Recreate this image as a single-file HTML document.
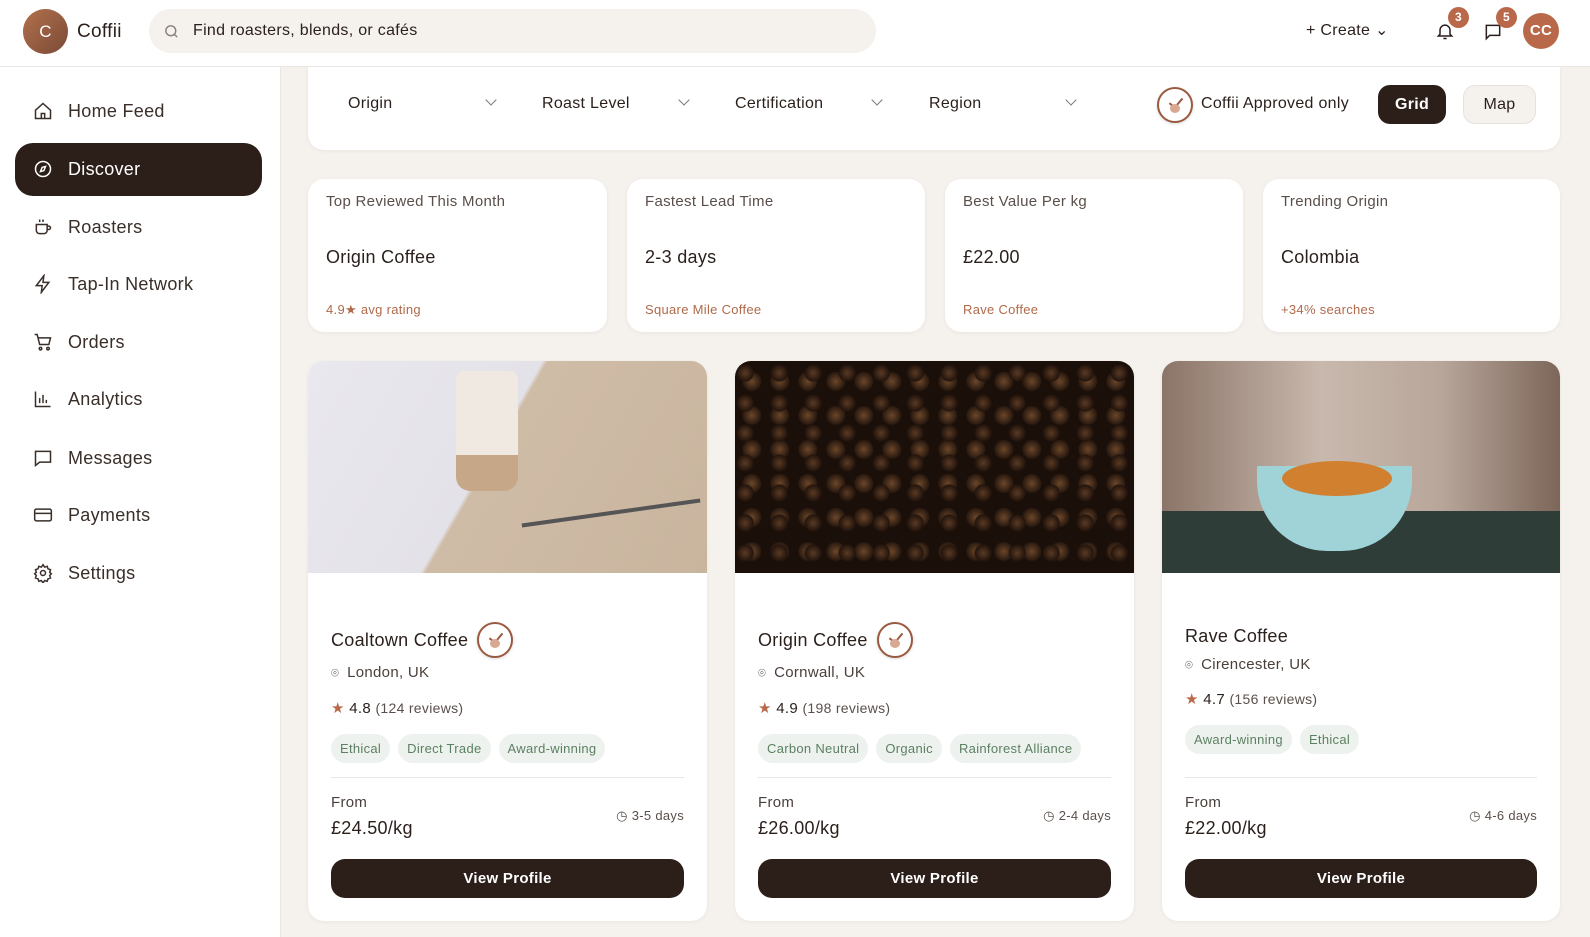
<!DOCTYPE html><html><head><meta charset="utf-8"><style>
*{box-sizing:border-box;margin:0;padding:0}
body{width:1590px;height:937px;overflow:hidden;font-family:"Liberation Sans",sans-serif;background:#f5f1ec;color:#2a1f1b;position:relative;letter-spacing:.3px}
.hdr{position:absolute;z-index:5;left:0;top:0;width:1590px;height:67px;background:#fff;border-bottom:1px solid #ebe6e1}
.logo{position:absolute;left:23px;top:9px;width:45px;height:45px;border-radius:50%;background:linear-gradient(135deg,#b2714d,#7a4a36);color:#fff;font-size:17px;text-align:center;line-height:45px}
.brand{position:absolute;left:77px;top:21px;font-size:19px}
.search{position:absolute;left:149px;top:9px;width:727px;height:44px;border-radius:22px;background:#f5f1ec}
.search span{position:absolute;left:44px;top:13px;font-size:16px}
.side{position:absolute;left:0;top:67px;width:281px;height:870px;background:#fff;border-right:1px solid #ebe6e1}
.nav{position:absolute;left:15px;width:247px;height:53px;border-radius:18px;font-size:18px;color:#3a2e29}
.nav svg{position:absolute;left:18px;top:16px}
.nav span{position:absolute;left:53px;top:16px}
.nav.on{background:#2c1f1a;color:#fff}
.card{position:absolute;background:#fff;border-radius:16px;box-shadow:0 1px 4px rgba(0,0,0,.05)}
.flt{font-size:16px;position:absolute;top:95px}
.chev{position:absolute;top:96px;width:8px;height:8px;border-right:1.5px solid #777;border-bottom:1.5px solid #777;transform:rotate(45deg)}
.st .a{position:absolute;left:18px;top:14px;font-size:15px;color:#5a4f4a}
.st .b{position:absolute;left:18px;top:68px;font-size:18px}
.st .c{position:absolute;left:18px;top:123px;font-size:13px;color:#b06a4a}
.pc .img{position:absolute;left:0;top:0;width:100%;height:212px;border-radius:16px 16px 0 0;overflow:hidden}
.pc .nm{position:absolute;left:23px;font-size:18px;display:flex;align-items:center;gap:9px}
.pc .loc{position:absolute;left:23px;font-size:15px;color:#4a3f3a;display:flex;align-items:center;gap:8px}
.pc .rt{position:absolute;left:23px;font-size:15px}
.tags{position:absolute;left:23px;display:flex;gap:8px}
.tag{background:#eef2ee;color:#5b8062;font-size:13px;padding:7px 9px;border-radius:15px}
.pc hr{position:absolute;left:23px;right:23px;border:0;border-top:1px solid #ebe6e1}
.pc .fr{position:absolute;left:23px;top:433px;font-size:15px;color:#4a3f3a}
.pc .pr{position:absolute;left:23px;top:457px;font-size:18px}
.pc .dy{position:absolute;right:23px;top:447px;font-size:13px;color:#5a4f4a}
.pc .btn{position:absolute;left:23px;right:23px;top:498px;height:39px;border-radius:14px;background:#2c1f1a;color:#fff;font-weight:bold;font-size:15px;text-align:center;line-height:39px}
.badge{position:relative;display:inline-block;width:36px;height:36px;border-radius:50%;border:2px solid #9a5a40;background:#fff;box-shadow:0 1px 3px rgba(0,0,0,.15)}
.badge:after{content:"";position:absolute;left:11px;top:15px;width:10px;height:9px;border-radius:50%;background:#d8a891}
.badge:before{content:"";position:absolute;left:13px;top:6px;width:6px;height:11px;border-right:2px solid #9a5a40;border-bottom:2px solid #9a5a40;transform:rotate(40deg)}
.bdg{position:absolute;width:21px;height:21px;border-radius:50%;background:#b9694a;color:#fff;font-size:12px;font-weight:bold;text-align:center;line-height:21px}
</style></head><body>
<div class="hdr">
<div class="logo">C</div><div class="brand">Coffii</div>
<div class="search"><svg style="position:absolute;left:14px;top:14px" width="17" height="17" viewBox="0 0 24 24" fill="none" stroke="#8a7f7a" stroke-width="2"><circle cx="11" cy="11" r="7"/><path d="M20 20l-4-4"/></svg><span>Find roasters, blends, or cafés</span></div>
<div style="position:absolute;left:1306px;top:20px;font-size:16px">+ Create ⌄</div>
<svg style="position:absolute;left:1435px;top:21px" width="20" height="20" viewBox="0 0 24 24" fill="none" stroke="#2a1f1b" stroke-width="1.8"><path d="M6 16V11a6 6 0 0112 0v5l2 2H4z M10 21h4"/></svg>
<div class="bdg" style="left:1448px;top:7px">3</div>
<svg style="position:absolute;left:1483px;top:22px" width="20" height="20" viewBox="0 0 24 24" fill="none" stroke="#2a1f1b" stroke-width="1.8"><path d="M4 4h16v12H8l-4 4z"/></svg>
<div class="bdg" style="left:1496px;top:7px">5</div>
<div style="position:absolute;left:1523px;top:13px;width:36px;height:36px;border-radius:50%;background:#b9694a;color:#fff;font-weight:bold;font-size:15px;text-align:center;line-height:36px">CC</div>
</div>
<div class="side">
<div class="nav" style="top:18px"><svg width="20" height="20" viewBox="0 0 24 24" fill="none" stroke="currentColor" stroke-width="1.8"><path d="M3 11l9-8 9 8v10H3z M10 21v-6h4v6"/></svg><span>Home Feed</span></div>
<div class="nav on" style="top:76px"><svg width="20" height="20" viewBox="0 0 24 24" fill="none" stroke="#fff" stroke-width="1.8"><circle cx="12" cy="12" r="9"/><path d="M15 9l-2 5-4 1 2-5z"/></svg><span>Discover</span></div>
<div class="nav" style="top:134px"><svg width="20" height="20" viewBox="0 0 24 24" fill="none" stroke="currentColor" stroke-width="1.8"><path d="M4 9h13v7a4 4 0 01-4 4H8a4 4 0 01-4-4z M17 11h2a2 2 0 010 4h-2 M8 3v3 M12 3v3"/></svg><span>Roasters</span></div>
<div class="nav" style="top:191px"><svg width="20" height="20" viewBox="0 0 24 24" fill="none" stroke="currentColor" stroke-width="1.8"><path d="M13 2L4 14h7l-1 8 9-12h-7z"/></svg><span>Tap-In Network</span></div>
<div class="nav" style="top:249px"><svg width="20" height="20" viewBox="0 0 24 24" fill="none" stroke="currentColor" stroke-width="1.8"><path d="M2 3h3l3 12h11l2-8H6"/><circle cx="9" cy="20" r="1.5"/><circle cx="18" cy="20" r="1.5"/></svg><span>Orders</span></div>
<div class="nav" style="top:306px"><svg width="20" height="20" viewBox="0 0 24 24" fill="none" stroke="currentColor" stroke-width="1.8"><path d="M3 3v18h18 M8 17v-6 M12 17V7 M16 17v-4"/></svg><span>Analytics</span></div>
<div class="nav" style="top:365px"><svg width="20" height="20" viewBox="0 0 24 24" fill="none" stroke="currentColor" stroke-width="1.8"><path d="M3 4h18v13H8l-5 4z"/></svg><span>Messages</span></div>
<div class="nav" style="top:422px"><svg width="20" height="20" viewBox="0 0 24 24" fill="none" stroke="currentColor" stroke-width="1.8"><rect x="2" y="5" width="20" height="14" rx="2"/><path d="M2 10h20"/></svg><span>Payments</span></div>
<div class="nav" style="top:480px"><svg width="20" height="20" viewBox="0 0 24 24" fill="none" stroke="currentColor" stroke-width="1.8"><circle cx="12" cy="12" r="3"/><path d="M12 2l2 3 3-1 1 3 3 1-1 3 2 2-2 2 1 3-3 1-1 3-3-1-2 3-2-3-3 1-1-3-3-1 1-3-2-2 2-2-1-3 3-1 1-3 3 1z"/></svg><span>Settings</span></div>
</div>
<div class="card" style="left:308px;top:50px;width:1252px;height:100px;border-radius:0 0 16px 16px"></div>
<div class="flt" style="left:348px">Origin</div><div class="chev" style="left:487px"></div>
<div class="flt" style="left:542px">Roast Level</div><div class="chev" style="left:680px"></div>
<div class="flt" style="left:735px">Certification</div><div class="chev" style="left:873px"></div>
<div class="flt" style="left:929px">Region</div><div class="chev" style="left:1067px"></div>
<div class="badge" style="position:absolute;left:1157px;top:87px"></div>
<div class="flt" style="left:1201px">Coffii Approved only</div>
<div style="position:absolute;left:1378px;top:85px;width:68px;height:39px;border-radius:12px;background:#2c1f1a;color:#fff;font-weight:bold;text-align:center;line-height:39px;font-size:16px">Grid</div>
<div style="position:absolute;left:1463px;top:85px;width:73px;height:39px;border-radius:12px;background:#f5f1ec;border:1px solid #e8e2dc;text-align:center;line-height:37px;font-size:16px">Map</div>

<div class="card st" style="left:308px;top:179px;width:299px;height:153px"><div class="a">Top Reviewed This Month</div><div class="b">Origin Coffee</div><div class="c">4.9★ avg rating</div></div>
<div class="card st" style="left:627px;top:179px;width:298px;height:153px"><div class="a">Fastest Lead Time</div><div class="b">2-3 days</div><div class="c">Square Mile Coffee</div></div>
<div class="card st" style="left:945px;top:179px;width:298px;height:153px"><div class="a">Best Value Per kg</div><div class="b">£22.00</div><div class="c">Rave Coffee</div></div>
<div class="card st" style="left:1263px;top:179px;width:297px;height:153px"><div class="a">Trending Origin</div><div class="b">Colombia</div><div class="c">+34% searches</div></div>

<div class="card pc" style="left:308px;top:361px;width:399px;height:560px">
<div class="img" style="background:linear-gradient(120deg,#e9e8ee 0%,#e3e2e8 45%,#cfbca7 46%,#c9b59e 100%)"><div style="position:absolute;left:148px;top:10px;width:62px;height:120px;border-radius:8px 8px 14px 14px;background:linear-gradient(#efe9e1 70%,#c6a889 70%)"></div><div style="position:absolute;left:213px;top:150px;width:180px;height:4px;background:#555;transform:rotate(-8deg)"></div></div>
<div class="nm" style="top:261px">Coaltown Coffee <span class="badge"></span></div>
<div class="loc" style="top:303px"><span style="font-size:13px">⌾</span> London, UK</div>
<div class="rt" style="top:338px"><span style="color:#b9694a">★</span> 4.8 <span style="font-size:14px;color:#5a4f4a">(124 reviews)</span></div>
<div class="tags" style="top:373px"><span class="tag">Ethical</span><span class="tag">Direct Trade</span><span class="tag">Award-winning</span></div>
<hr style="top:416px"><div class="fr">From</div><div class="pr">£24.50/kg</div><div class="dy">◷ 3-5 days</div><div class="btn">View Profile</div></div>

<div class="card pc" style="left:735px;top:361px;width:399px;height:560px">
<div class="img" style="background:radial-gradient(circle at 30% 40%,#5a3a24 0,#24150d 8px,transparent 9px) 0 0/34px 30px,radial-gradient(circle at 60% 60%,#6b4629 0,#2a1a10 9px,transparent 10px) 0 0/28px 34px,#1a0f09"></div>
<div class="nm" style="top:261px">Origin Coffee <span class="badge"></span></div>
<div class="loc" style="top:303px"><span style="font-size:13px">⌾</span> Cornwall, UK</div>
<div class="rt" style="top:338px"><span style="color:#b9694a">★</span> 4.9 <span style="font-size:14px;color:#5a4f4a">(198 reviews)</span></div>
<div class="tags" style="top:373px"><span class="tag">Carbon Neutral</span><span class="tag">Organic</span><span class="tag">Rainforest Alliance</span></div>
<hr style="top:416px"><div class="fr">From</div><div class="pr">£26.00/kg</div><div class="dy">◷ 2-4 days</div><div class="btn">View Profile</div></div>

<div class="card pc" style="left:1162px;top:361px;width:398px;height:560px">
<div class="img" style="background:linear-gradient(90deg,#8b7468,#c9b8ad 40%,#b8a69a 70%,#7d665a)"><div style="position:absolute;left:0;top:150px;width:100%;height:62px;background:#2f3d38"></div><div style="position:absolute;left:95px;top:105px;width:155px;height:85px;border-radius:0 0 70px 70px;background:#9fd3d8"></div><div style="position:absolute;left:120px;top:100px;width:110px;height:35px;border-radius:50%;background:#d0802f"></div></div>
<div class="nm" style="top:265px">Rave Coffee</div>
<div class="loc" style="top:295px"><span style="font-size:13px">⌾</span> Cirencester, UK</div>
<div class="rt" style="top:329px"><span style="color:#b9694a">★</span> 4.7 <span style="font-size:14px;color:#5a4f4a">(156 reviews)</span></div>
<div class="tags" style="top:364px"><span class="tag">Award-winning</span><span class="tag">Ethical</span></div>
<hr style="top:416px"><div class="fr">From</div><div class="pr">£22.00/kg</div><div class="dy">◷ 4-6 days</div><div class="btn">View Profile</div></div>
</body></html>
